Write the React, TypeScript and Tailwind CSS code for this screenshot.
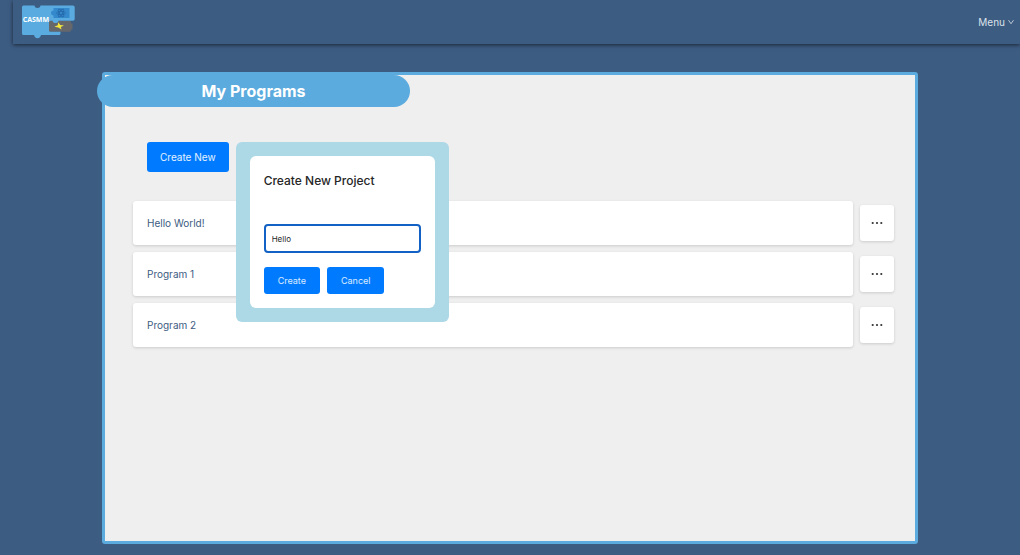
import { useState } from 'react';

const programs = ['Hello World!', 'Program 1', 'Program 2'];

function Logo() {
  return (
    <svg viewBox="0 0 54 34" className="h-[34px] w-[54px]" role="img" aria-label="CASMM">
      <path d="M28.500 15.700H47.500q1.500 0 1.500 1.500v1.300h1.500v6H49V25.500q0 1.300-1.500 1.300H28.500q-1.500 0-1.500-1.300V17.200q0-1.500 1.500-1.500Z" fill="#66676b" />
      <path
        d="M1.500 .5H12.500c.4 1.800 1.400 2.500 3 2.500s2.600-.7 3-2.500H51q1.700 0 1.700 1.700V14q0 1.700-1.700 1.700H36.500c-.4 1.500-1.400 2.300-3 2.300s-2.600-.8-3-2.300H28.500q-1.500 0-1.500 1.500V25.500q0 1.300 1.500 1.300H38.500V28.500q0 1.500-1.500 1.500H19c-.4 2-1.500 3.200-3.500 3.200S12.400 32 12 30H1.500Q0 30 0 28.500V2Q0 .5 1.500 .5Z"
        fill="#5aabe0"
      />
      <path d="M31.500 3H47.500V13H31.500V10.500c-1.600 0-2.500-1-2.500-2.500s.9-2.500 2.500-2.500Z" fill="#3489cd" />
      <g fill="none" stroke="#2467a8" strokeWidth=".8">
        <ellipse cx="39" cy="8" rx="4.500" ry="1.700" />
        <ellipse cx="39" cy="8" rx="4.500" ry="1.700" transform="rotate(60 39 8)" />
        <ellipse cx="39" cy="8" rx="4.500" ry="1.700" transform="rotate(120 39 8)" />
      </g>
      <path d="M36.200 17.300L38.200 20L42 20.400L38.800 22L39.600 24.600L36.300 22.400L32.400 21.800L35.800 20.200Z" fill="#f4e83c" />
      <text x="0.700" y="17" fill="white" fontSize="7" fontWeight="700" fontFamily="Open Sans, sans-serif">
        CASMM
      </text>
    </svg>
  );
}

function CreateDialog({ onClose }: { onClose: () => void }) {
  const [name, setName] = useState('Hello');
  return (
    <div
      role="dialog"
      aria-labelledby="create-title"
      className="absolute top-0 left-full z-10 ml-[7px] w-[213px] rounded-md bg-[#add8e6] p-[14px]"
    >
      <form
        className="rounded-md bg-white p-[14px]"
        onSubmit={(event) => event.preventDefault()}
      >
        <h2 id="create-title" className="text-[12px] leading-[22px] font-medium whitespace-nowrap text-[#262626]">
          Create New Project
        </h2>
        <input
          aria-label="Project name"
          value={name}
          onChange={(event) => setName(event.target.value)}
          className="mt-8 block h-[29px] w-full rounded border-2 border-[#1261c4] bg-white px-[6px] text-[8px] text-[#262626] outline-none"
        />
        <div className="mt-[14px] flex gap-[7px]">
          <button type="submit" className="h-[27px] rounded-[3px] bg-[#007bff] px-[14px] text-[9px] text-white/85">
            Create
          </button>
          <button
            type="button"
            onClick={onClose}
            className="h-[27px] rounded-[3px] bg-[#007bff] px-[14px] text-[9px] text-white/85"
          >
            Cancel
          </button>
        </div>
      </form>
    </div>
  );
}

export default function App() {
  const [open, setOpen] = useState(true);
  return (
    <div className="flex min-h-screen flex-col bg-[#3d5c82] font-['Inter',sans-serif]">
      <header className="ml-[13px] flex h-11 items-center justify-between pr-[6px] pl-[9px] shadow-[0_1px_4px_rgba(0,0,0,0.6)]">
        <a href="#home">
          <Logo />
        </a>
        <button type="button" className="flex items-center gap-[3px] text-[10px] text-[#dbe2ea]">
          Menu
          <svg viewBox="0 0 6 6" className="size-[6px]" fill="none" stroke="currentColor" strokeWidth=".8" aria-hidden="true">
            <path d="M.5 1.200L3 4.700L5.500 1.200" />
          </svg>
        </button>
      </header>

      <main className="mx-auto mt-7 mb-[11px] w-4/5 flex-1 rounded-[3px] border-3 border-[#5babde] bg-[#efefef]">
        <h1 className="-ml-2 w-[313px] rounded-full bg-[#5babde] text-center text-[16px] leading-8 font-bold text-white">
          My Programs
        </h1>
        <div className="mt-[35px] pr-[21px] pl-7">
          <div className="relative ml-[14px] w-fit">
            <button
              type="button"
              onClick={() => setOpen(true)}
              className="block h-[30px] rounded-[3px] bg-[#007bff] px-[13px] text-[10px] text-white/90"
            >
              Create New
            </button>
            {open && <CreateDialog onClose={() => setOpen(false)} />}
          </div>
          <ul className="mt-[29px] flex flex-col gap-[7px]">
            {programs.map((program) => (
              <li key={program} className="flex items-center gap-[7px]">
                <a
                  href="#program"
                  className="flex h-11 flex-1 items-center rounded-[3px] bg-white px-[14px] text-[10px] text-[#3d5c82] shadow-[0_1px_3px_rgba(0,0,0,0.15)]"
                >
                  {program}
                </a>
                <button
                  type="button"
                  aria-label={`Options for ${program}`}
                  className="flex h-9 w-[34px] items-center justify-center rounded-[3px] bg-white text-[#333] shadow-[0_1px_3px_rgba(0,0,0,0.15)]"
                >
                  <svg viewBox="0 0 12 4" className="h-1 w-3" fill="currentColor" aria-hidden="true">
                    <circle cx="1.700" cy="2" r="1.100" />
                    <circle cx="6" cy="2" r="1.100" />
                    <circle cx="10.300" cy="2" r="1.100" />
                  </svg>
                </button>
              </li>
            ))}
          </ul>
        </div>
      </main>
    </div>
  );
}
